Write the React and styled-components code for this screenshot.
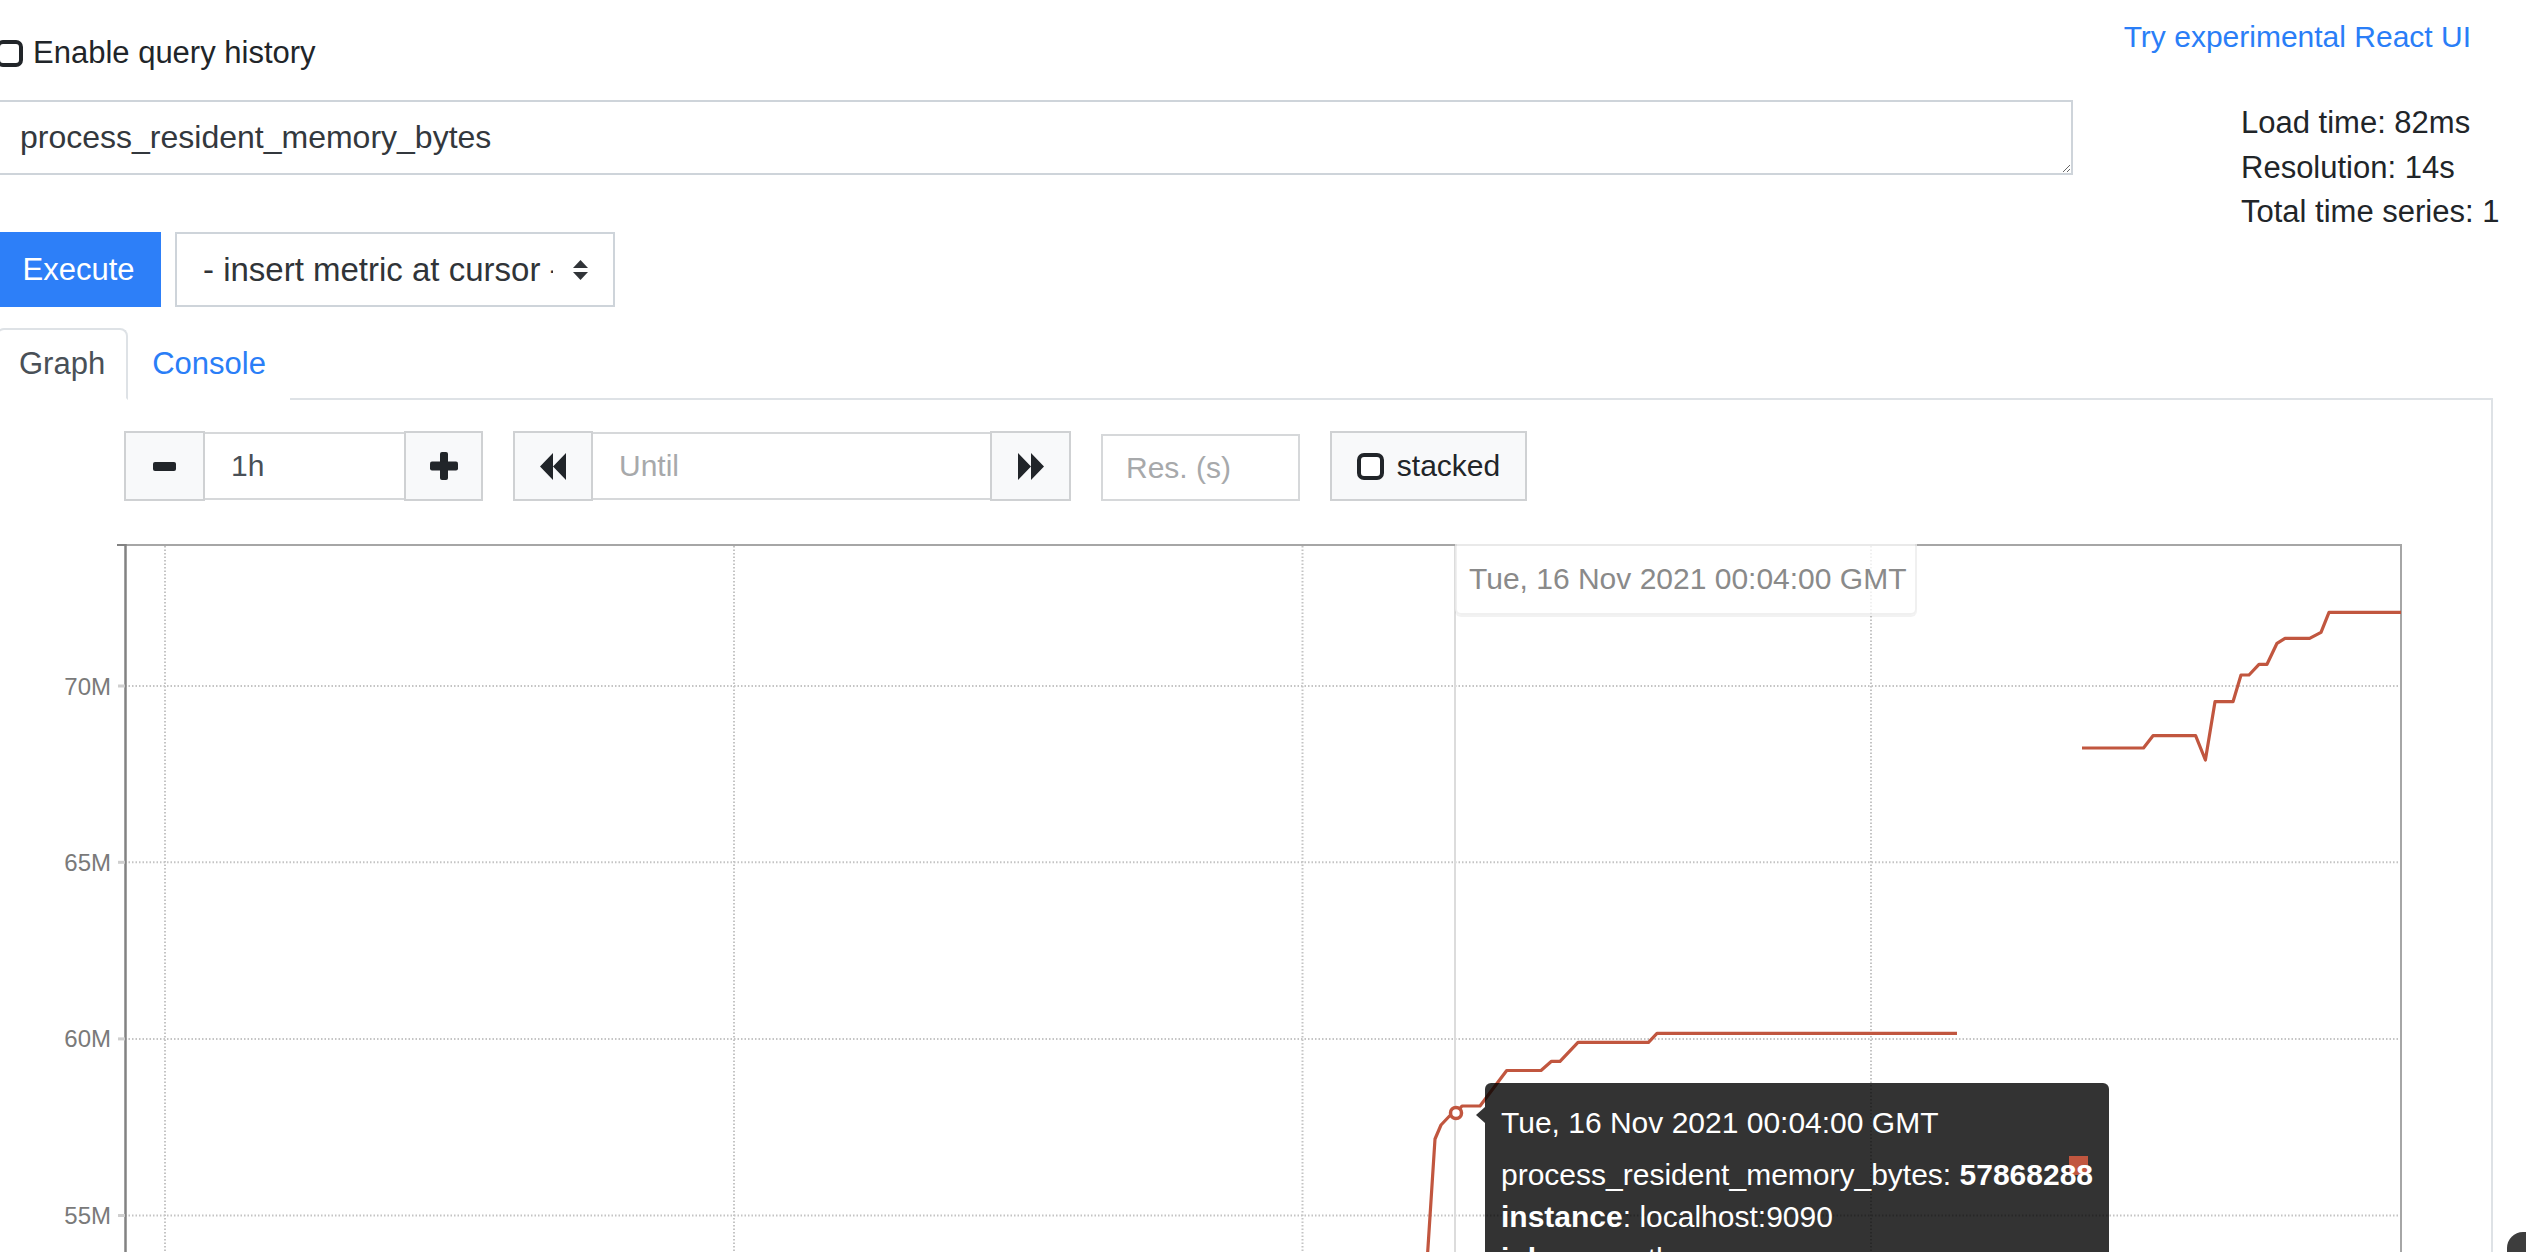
import React from 'react';
import styled, { createGlobalStyle } from 'styled-components';

const GlobalStyle = createGlobalStyle`
  html, body {
    margin: 0;
    padding: 0;
    overflow: hidden;
    background: #fff;
  }
  body {
    font-family: "Liberation Sans", Arial, sans-serif;
    color: #212529;
  }
  * { box-sizing: border-box; }
`;

const Page = styled.div`
  margin-left: -4px;
  width: 2530px;
`;

const Header = styled.div`
  display: flex;
  justify-content: space-between;
  align-items: flex-start;
  height: 100px;
  padding-right: 55px;
`;

const CheckLabel = styled.label`
  display: flex;
  align-items: center;
  gap: 10px;
  margin-top: 31px;
  font-size: 31px;
  line-height: 44px;
`;

const CheckBox = styled.span`
  display: inline-block;
  width: ${p => p.size || 27}px;
  height: ${p => p.size || 27}px;
  border: 4px solid #212529;
  border-radius: 7px;
  background: #fff;
`;

const TopLink = styled.a`
  margin-top: 15px;
  font-size: 30px;
  line-height: 44px;
  color: #2a7ef7;
  text-decoration: none;
`;

const QueryRow = styled.div`
  display: flex;
  align-items: flex-start;
`;

const QueryColumn = styled.div`
  width: 2077px;
  display: flex;
  flex-direction: column;
  gap: 57px;
`;

const QueryInput = styled.textarea`
  width: 100%;
  height: 75px;
  padding: 12px 22px;
  border: 2px solid #ced4da;
  border-radius: 0;
  font-family: "Liberation Sans", Arial, sans-serif;
  font-size: 32px;
  line-height: 47px;
  color: #33383d;
  outline: none;
  overflow: hidden;
`;

const ExecuteRow = styled.div`
  display: flex;
  gap: 14px;
  height: 75px;
`;

const ExecuteButton = styled.button`
  width: 165px;
  height: 75px;
  border: none;
  background: #2d7ff8;
  color: #fff;
  font-family: "Liberation Sans", Arial, sans-serif;
  font-size: 31px;
`;

const MetricSelect = styled.div`
  width: 440px;
  height: 75px;
  border: 2px solid #ced4da;
  display: flex;
  align-items: center;
  padding-left: 26px;
  gap: 20px;
  font-size: 33px;
  color: #303438;
`;

const SelectText = styled.span`
  width: 350px;
  overflow: hidden;
  white-space: nowrap;
`;

const Stats = styled.div`
  margin-left: 168px;
  padding-top: 1px;
  font-size: 31px;
  line-height: 44.5px;
  color: #212529;
`;

const TabList = styled.div`
  margin-top: 21px;
  width: 2497px;
  display: flex;
  border-bottom: 2px solid #dee2e6;
  height: 72px;
`;

const Tab = styled.div`
  height: 72px;
  padding: 0 ${p => (p.active ? '21px' : '22px')};
  display: flex;
  align-items: center;
  font-size: 31px;
  color: ${p => (p.active ? '#495057' : '#2a7ef7')};
  background: #fff;
  border: 2px solid ${p => (p.active ? '#dee2e6' : 'transparent')};
  border-bottom-color: ${p => (p.active ? '#fff' : 'transparent')};
  border-radius: 8px 8px 0 0;
  margin-bottom: -2px;
`;

const Panel = styled.div`
  width: 2497px;
  min-height: 900px;
  border-left: 2px solid #dee2e6;
  border-right: 2px solid #dee2e6;
  padding: 31px 0 0 42px;
`;

const Controls = styled.div`
  margin-left: 84px;
  height: 70px;
  display: flex;
  align-items: flex-end;
  gap: 30px;
`;

const Group = styled.div`
  display: flex;
  align-items: center;
  height: 70px;
`;

const GroupButton = styled.div`
  width: ${p => p.w || 80}px;
  height: 70px;
  background: #f8f9fa;
  border: 2px solid #cfd1d3;
  display: flex;
  align-items: center;
  justify-content: center;
  gap: 13px;
  font-size: 30px;
  color: #212529;
`;

const GroupInput = styled.div`
  width: ${p => p.w}px;
  height: ${p => p.h || 68}px;
  border-top: 2px solid #d6d8da;
  border-bottom: 2px solid #d6d8da;
  border-left: ${p => (p.boxed ? '2px solid #d6d8da' : 'none')};
  border-right: ${p => (p.boxed ? '2px solid #d6d8da' : 'none')};
  display: flex;
  align-items: center;
  padding-left: ${p => p.pad || 26}px;
  font-size: 30px;
  color: ${p => (p.placeholder ? '#a7a9ab' : '#495057')};
`;

const ChartWrap = styled.div`
  position: relative;
  margin-top: 29px;
  width: 2400px;
  height: 760px;
`;

const HoverDate = styled.div`
  position: absolute;
  left: 1415px;
  top: 14px;
  width: 462px;
  height: 71px;
  padding-left: 12px;
  display: flex;
  align-items: center;
  background: rgba(255, 255, 255, 0.75);
  border: 2px solid rgba(0, 0, 0, 0.06);
  border-top: none;
  border-radius: 0 0 6px 6px;
  box-shadow: 0 2px 0 rgba(0, 0, 0, 0.05);
  font-size: 30px;
  color: #8a8a8a;
  white-space: nowrap;
`;

const Tooltip = styled.div`
  position: absolute;
  left: 1445px;
  top: 553px;
  width: 624px;
  height: 260px;
  padding: 19px 16px 0 16px;
  background: rgba(0, 0, 0, 0.8);
  border-radius: 6px;
  color: #fff;
  font-size: 30px;
  line-height: 42px;
  white-space: nowrap;

  &::before {
    content: '';
    position: absolute;
    left: -9px;
    top: 24px;
    border-top: 8px solid transparent;
    border-bottom: 8px solid transparent;
    border-right: 9px solid rgba(0, 0, 0, 0.8);
  }
`;

const TooltipTitle = styled.div`
  margin-bottom: 10px;
`;

const TooltipLine = styled.div`
  position: relative;
`;

const Swatch = styled.span`
  position: absolute;
  left: 584px;
  top: 73px;
  width: 19px;
  height: 19px;
  background: ${p => p.color};
`;

const Corner = styled.div`
  position: fixed;
  right: 0;
  bottom: 0;
  width: 19px;
  height: 20px;
  background: #3d3d3d;
  border-top-left-radius: 16px;
`;

const SERIES = '#c1563f';

const upper = [[2082, 748], [2143.5, 748], [2153, 735.7], [2195.6, 735.7], [2205.4, 760], [2215, 701.7], [2233, 701.7], [2241, 675], [2249, 675], [2259, 664.3], [2267, 664.3], [2277, 643.3], [2285, 638.3], [2309.6, 638.3], [2321, 632.3], [2329, 612.3], [2401, 612.3]];
const lower = [[1424.6, 1300], [1435, 1139], [1441, 1125], [1449.5, 1116], [1456, 1113], [1462, 1106], [1480, 1106], [1506.7, 1070.5], [1541, 1070.5], [1551.5, 1061.3], [1560, 1061.3], [1578, 1042.3], [1648.5, 1042.3], [1657, 1033.3], [1957, 1033.3]];
const yTicks = [[686, '70M'], [862.3, '65M'], [1038.9, '60M'], [1215.5, '55M']];
const xGrid = [165, 734, 1302.5, 1871];

const toPath = pts => pts.map((p, i) => `${i ? 'L' : 'M'}${p[0]} ${p[1]}`).join(' ');

// chart is drawn in page coordinates: the svg sits at (40, 530)
function Chart() {
  return (
    <svg width="2400" height="760" viewBox="40 530 2400 760" style={{ display: 'block' }}>
      {yTicks.map(([y]) => (
        <line key={y} x1="125" x2="2401" y1={y} y2={y} stroke="#c4c4c4" strokeWidth="2" strokeDasharray="1.5 2" />
      ))}
      {xGrid.map(x => (
        <line key={x} x1={x} x2={x} y1="546" y2="1290" stroke="#c4c4c4" strokeWidth="2" strokeDasharray="1.5 2" />
      ))}
      <line x1="1455" x2="1455" y1="546" y2="1290" stroke="#dcdcdc" strokeWidth="2" />
      <line x1="125" x2="2402" y1="545" y2="545" stroke="#a6a6a6" strokeWidth="2" />
      <line x1="2401" x2="2401" y1="544" y2="1290" stroke="#a6a6a6" strokeWidth="2" />
      <line x1="125.5" x2="125.5" y1="544" y2="1290" stroke="#828282" strokeWidth="2.5" />
      <line x1="117" x2="125" y1="545" y2="545" stroke="#828282" strokeWidth="2" />
      {yTicks.map(([y, label]) => (
        <g key={label}>
          <line x1="118" x2="125" y1={y} y2={y} stroke="#cfcfcf" strokeWidth="3" />
          <text x="111" y={y + 8.5} textAnchor="end" fontFamily="Liberation Sans, Arial, sans-serif" fontSize="24" fill="#7a7a7a">{label}</text>
        </g>
      ))}
      <path d={toPath(upper)} fill="none" stroke={SERIES} strokeWidth="3.2" strokeLinejoin="round" />
      <path d={toPath(lower)} fill="none" stroke={SERIES} strokeWidth="3.2" strokeLinejoin="round" />
      <circle cx="1456" cy="1113" r="5.5" fill="#fff" stroke={SERIES} strokeWidth="3.5" />
    </svg>
  );
}

const MinusIcon = () => (
  <svg width="23" height="9" viewBox="0 0 23 9"><rect width="23" height="9" rx="2" fill="#212529" /></svg>
);

const PlusIcon = () => (
  <svg width="28" height="28" viewBox="0 0 28 28">
    <rect x="10" y="0" width="8" height="28" rx="2" fill="#212529" />
    <rect x="0" y="9.5" width="28" height="9" rx="2" fill="#212529" />
  </svg>
);

const SkipIcon = ({ flip }) => (
  <svg width="26" height="27" viewBox="0 0 26 27" style={flip ? { transform: 'scaleX(-1)' } : undefined}>
    <path d="M0 13.5 L13 0 L13 27 Z M13 13.5 L26 0 L26 27 Z" fill="#212529" />
  </svg>
);

const SortIcon = () => (
  <svg width="15" height="20" viewBox="0 0 15 20">
    <path d="M7.5 0 L15 8 L0 8 Z M0 12 L15 12 L7.5 20 Z" fill="#303438" />
  </svg>
);

export default function App() {
  return (
    <>
      <GlobalStyle />
      <Page>
        <Header>
          <CheckLabel>
            <CheckBox />
            Enable query history
          </CheckLabel>
          <TopLink href="#">Try experimental React UI</TopLink>
        </Header>

        <QueryRow>
          <QueryColumn>
            <QueryInput defaultValue="process_resident_memory_bytes" spellCheck={false} />
            <ExecuteRow>
              <ExecuteButton>Execute</ExecuteButton>
              <MetricSelect>
                <SelectText>- insert metric at cursor -</SelectText>
                <SortIcon />
              </MetricSelect>
            </ExecuteRow>
          </QueryColumn>
          <Stats>
            <div>Load time: 82ms</div>
            <div>Resolution: 14s</div>
            <div>Total time series: 1</div>
          </Stats>
        </QueryRow>

        <TabList>
          <Tab active>Graph</Tab>
          <Tab>Console</Tab>
        </TabList>

        <Panel>
          <Controls>
            <Group>
              <GroupButton w={81}><MinusIcon /></GroupButton>
              <GroupInput w={199}>1h</GroupInput>
              <GroupButton w={79}><PlusIcon /></GroupButton>
            </Group>
            <Group>
              <GroupButton><SkipIcon /></GroupButton>
              <GroupInput w={397} placeholder>Until</GroupInput>
              <GroupButton w={81}><SkipIcon flip /></GroupButton>
            </Group>
            <GroupInput w={199} h={67} pad={23} boxed placeholder>Res. (s)</GroupInput>
            <GroupButton w={197}>
              <CheckBox />
              stacked
            </GroupButton>
          </Controls>

          <ChartWrap>
            <Chart />
            <HoverDate>Tue, 16 Nov 2021 00:04:00 GMT</HoverDate>
            <Tooltip>
              <Swatch color={SERIES} />
              <TooltipTitle>Tue, 16 Nov 2021 00:04:00 GMT</TooltipTitle>
              <TooltipLine>process_resident_memory_bytes: <b>57868288</b></TooltipLine>
              <TooltipLine><b>instance</b>: localhost:9090</TooltipLine>
              <TooltipLine><b>job</b>: prometheus</TooltipLine>
            </Tooltip>
          </ChartWrap>
        </Panel>
      </Page>
      <Corner />
    </>
  );
}
